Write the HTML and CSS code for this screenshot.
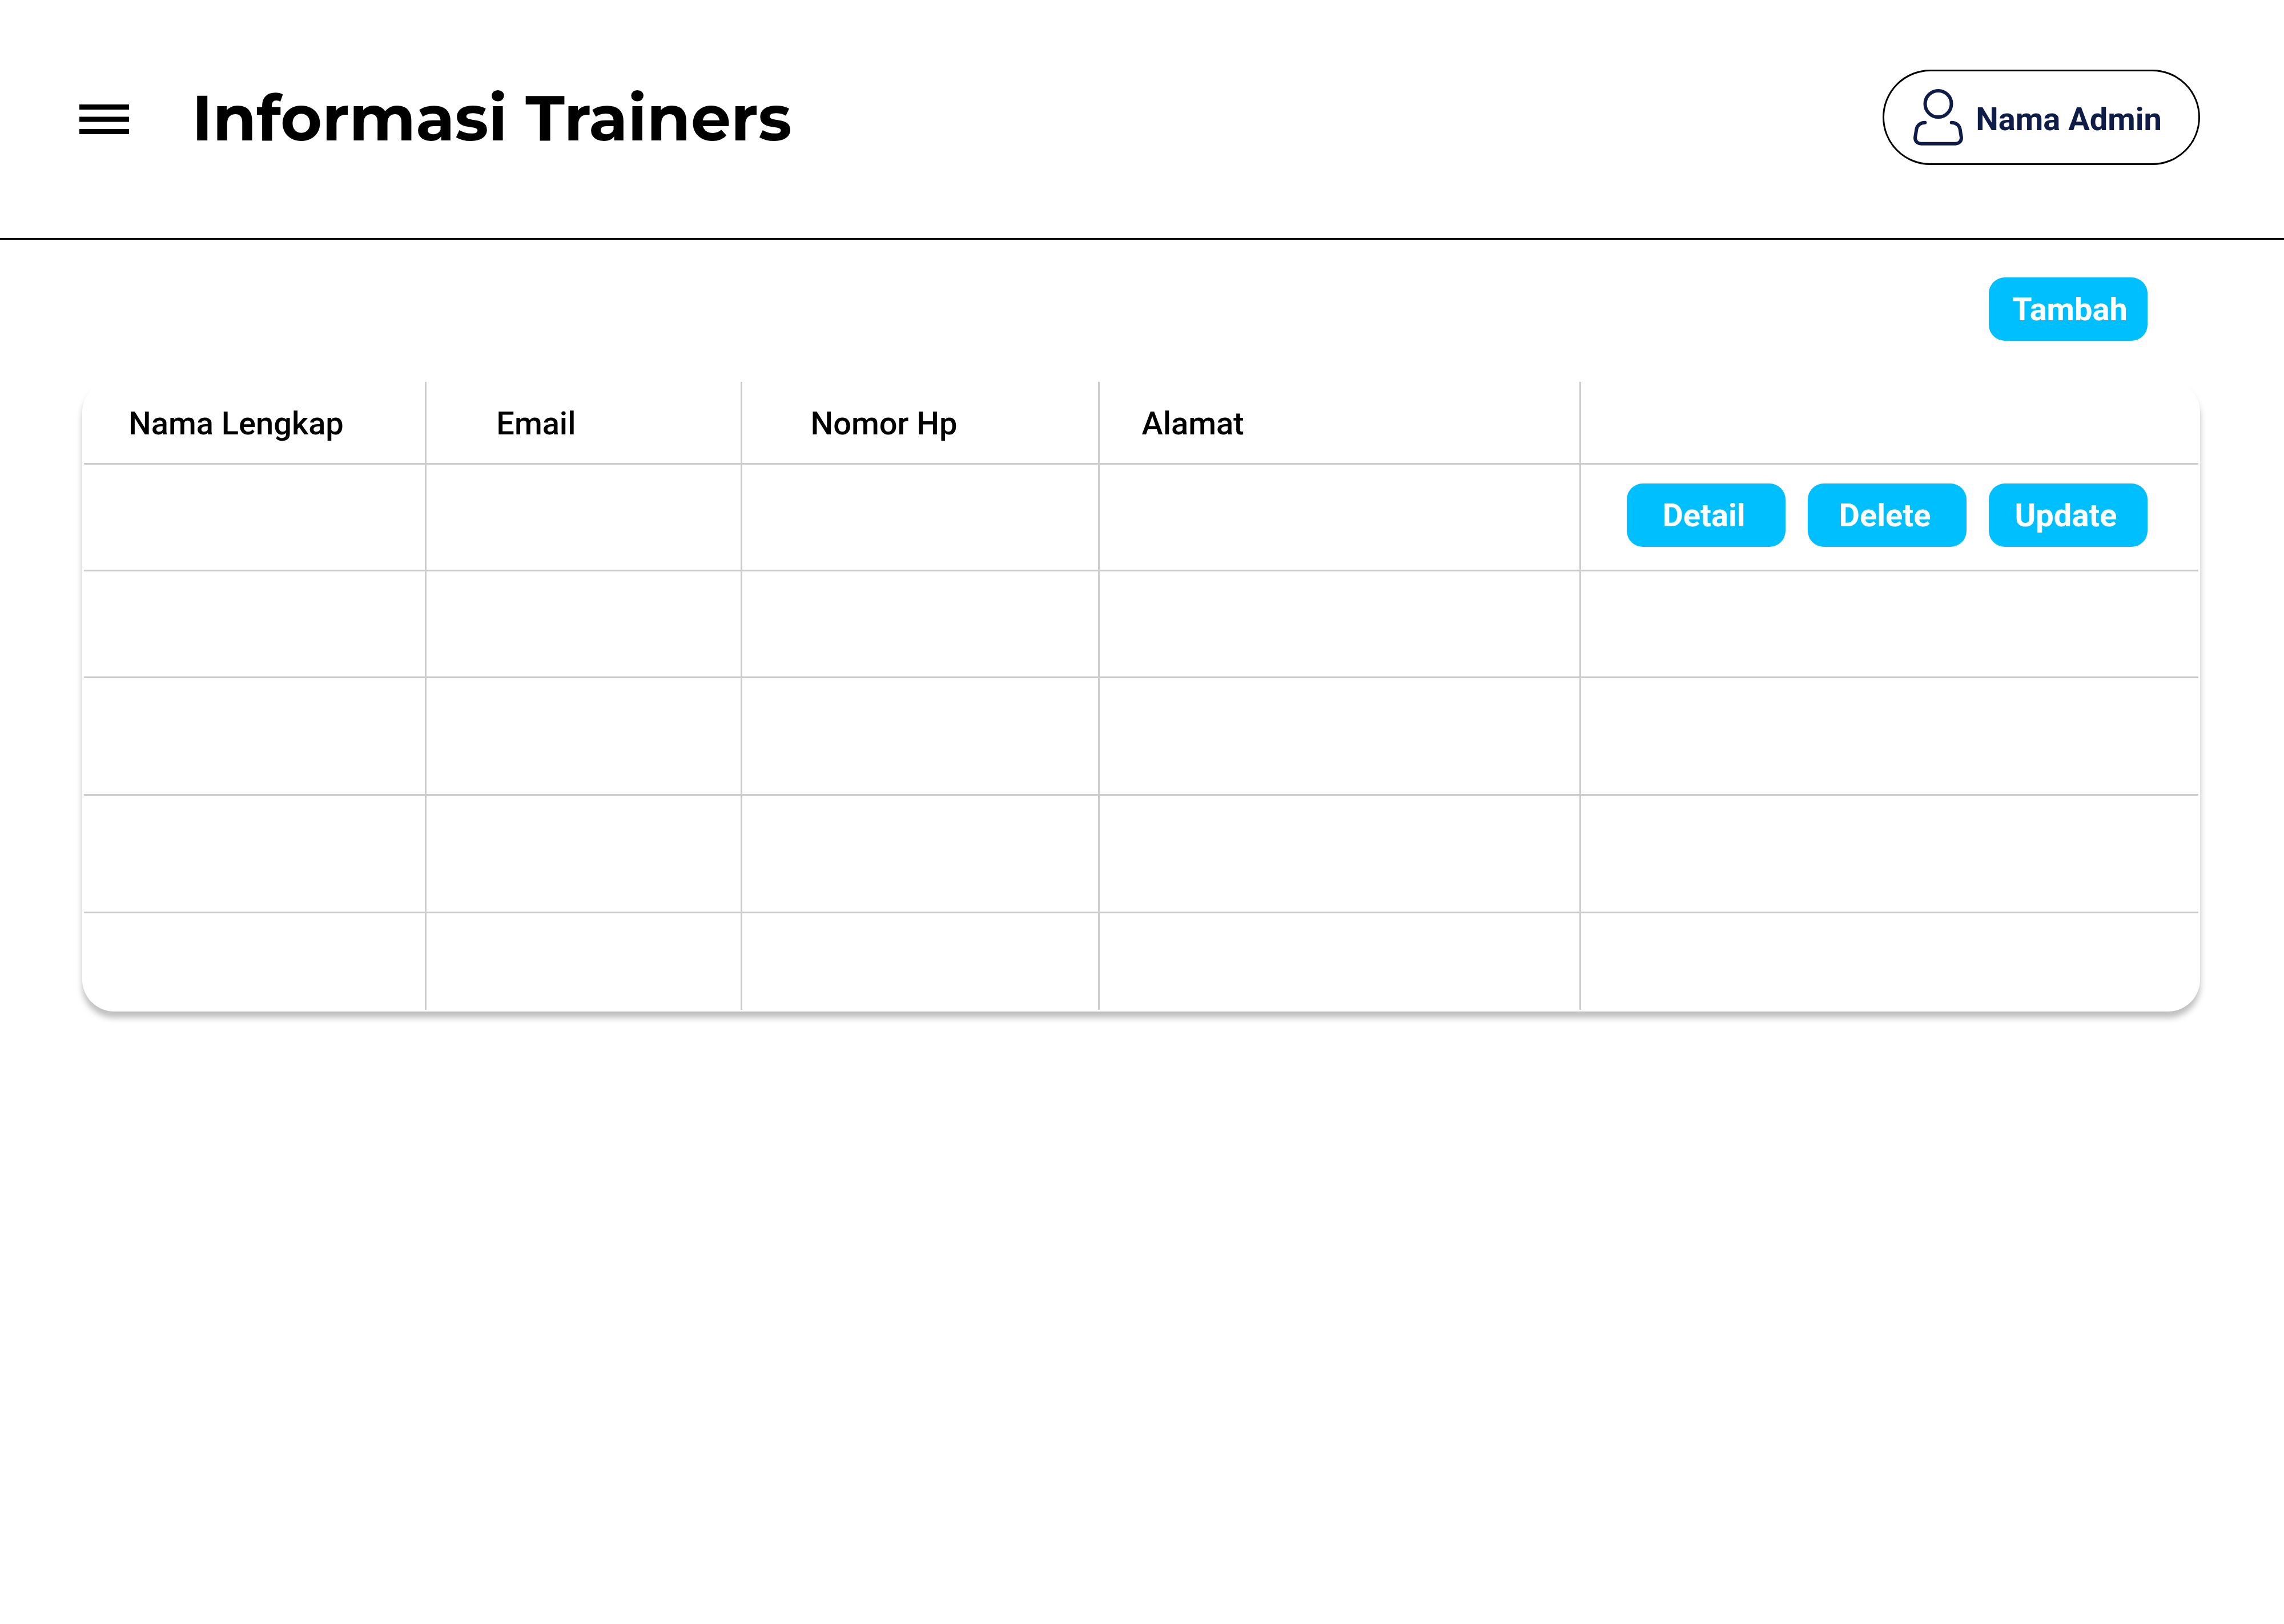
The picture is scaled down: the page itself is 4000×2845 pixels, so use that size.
FILE: index.html
```html
<!DOCTYPE html>
<html lang="id">
<head>
  <meta charset="utf-8">
  <meta name="viewport" content="width=device-width, initial-scale=1">
  <title>Informasi Trainers</title>
  <link rel="stylesheet" href="styles.css">
</head>
<body>
  <header class="topbar">
    <div class="topbar-start">
      <button class="menu-button" type="button" aria-label="Menu">
        <svg class="menu-icon" viewBox="0 0 87 52" aria-hidden="true">
          <path d="M0 0h87v9H0zM0 21.5h87v9H0zM0 43h87v9H0z" fill="currentColor"/>
        </svg>
      </button>
      <h1 class="page-title">Informasi Trainers</h1>
    </div>
    <button class="account" type="button">
      <svg class="account-icon" viewBox="0 0 87 99" fill="none" stroke="currentColor" stroke-width="6" stroke-linecap="round" aria-hidden="true">
        <circle cx="43.5" cy="26" r="23"/>
        <path d="M20.3 58.7C12 58.7 6 64 5.2 71.5L3.1 84.500C2.500 91 7 95.700 13.500 95.700H73.500C80 95.700 84.500 91 83.900 84.500L81.800 71.500C81 64 75 58.700 66.700 58.700"/>
      </svg>
      <span class="account-name">Nama Admin</span>
    </button>
  </header>

  <main class="content">
    <div class="toolbar">
      <button class="button toolbar-button" type="button">Tambah</button>
    </div>

    <div class="card">
      <table class="trainers">
        <colgroup>
          <col class="col-name">
          <col class="col-email">
          <col class="col-phone">
          <col class="col-address">
          <col>
        </colgroup>
        <thead>
          <tr>
            <th class="head-name" scope="col">Nama Lengkap</th>
            <th class="head-email" scope="col">Email</th>
            <th class="head-phone" scope="col">Nomor Hp</th>
            <th class="head-address" scope="col">Alamat</th>
            <td></td>
          </tr>
        </thead>
        <tbody>
          <tr class="row">
            <td></td><td></td><td></td><td></td>
            <td class="actions-cell">
              <div class="actions">
                <button class="button row-button" type="button">Detail</button>
                <button class="button row-button" type="button">Delete</button>
                <button class="button row-button" type="button">Update</button>
              </div>
            </td>
          </tr>
          <tr class="row"><td></td><td></td><td></td><td></td><td></td></tr>
          <tr class="row-tall"><td></td><td></td><td></td><td></td><td></td></tr>
          <tr class="row-tall"><td></td><td></td><td></td><td></td><td></td></tr>
          <tr class="row-last"><td></td><td></td><td></td><td></td><td></td></tr>
        </tbody>
      </table>
    </div>
  </main>
</body>
</html>
```

FILE: styles.css
```css
* {
  box-sizing: border-box;
}

body {
  margin: 0;
  background: #fff;
  color: #000;
  font-family: Roboto, sans-serif;
  font-size: 56px;
  line-height: 64px;
}

button {
  margin: 0;
  padding: 0;
  border: 0;
  background: none;
  color: inherit;
  font: inherit;
  cursor: pointer;
}

.topbar {
  display: flex;
  align-items: center;
  justify-content: space-between;
  padding: 122px 147px 128px 139px;
  border-bottom: 3px solid #000;
}

.topbar-start {
  display: flex;
  align-items: center;
  gap: 110px;
  padding-top: 6px;
}

.menu-icon {
  display: block;
  width: 87px;
  height: 52px;
}

.page-title {
  margin: 0;
  padding-bottom: 4px;
  font-family: Montserrat, Inter, sans-serif;
  font-size: 111px;
  font-weight: 700;
  line-height: 136px;
}

.account {
  display: flex;
  align-items: center;
  gap: 22px;
  padding: 31px 64px 31px 51px;
  border: 3px solid #000;
  border-radius: 84px;
  color: #0f1c48;
  font-weight: 700;
}

.account-icon {
  width: 87px;
  height: 99px;
}

.account-name {
  padding-top: 6px;
}

.content {
  padding: 66px 147px 128px 144px;
}

.toolbar {
  display: flex;
  justify-content: flex-end;
  padding: 0 92px 69px 0;
}

.button {
  width: 278px;
  height: 111px;
  border-radius: 28px;
  background: #00bfff;
  color: #fff;
  font-weight: 700;
  text-align: center;
}

.toolbar-button {
  padding-left: 6px;
}

.card {
  padding: 3px;
  border-radius: 56px;
  background: #fff;
  box-shadow: 0 11px 11px rgba(0, 0, 0, 0.25);
}

.trainers {
  width: 100%;
  table-layout: fixed;
  border-collapse: separate;
  border-spacing: 0;
}

.col-name {
  width: 16.21%;
}

.col-email {
  width: 14.94%;
}

.col-phone {
  width: 16.88%;
}

.col-address {
  width: 22.77%;
}

.trainers th,
.trainers td {
  padding: 0;
  border-right: 3px solid #ccc;
  border-bottom: 3px solid #ccc;
}

.trainers tr > :last-child {
  border-right: 0;
}

.trainers .row-last td {
  border-bottom: 0;
}

.trainers th {
  height: 145px;
  padding-top: 3px;
  font-weight: 500;
  text-align: left;
}

.trainers .head-name {
  padding-left: 78px;
}

.trainers .head-email {
  padding-left: 122px;
}

.trainers .head-phone {
  padding-left: 119px;
}

.trainers .head-address {
  padding-left: 74px;
}

.row {
  height: 187px;
}

.row-tall {
  height: 206px;
}

.row-last {
  height: 169px;
}

.trainers .actions-cell {
  padding: 33px 89px 33px 0;
  vertical-align: top;
}

.actions {
  display: flex;
  justify-content: flex-end;
  gap: 39px;
}

.row-button {
  padding-right: 8px;
}
```
